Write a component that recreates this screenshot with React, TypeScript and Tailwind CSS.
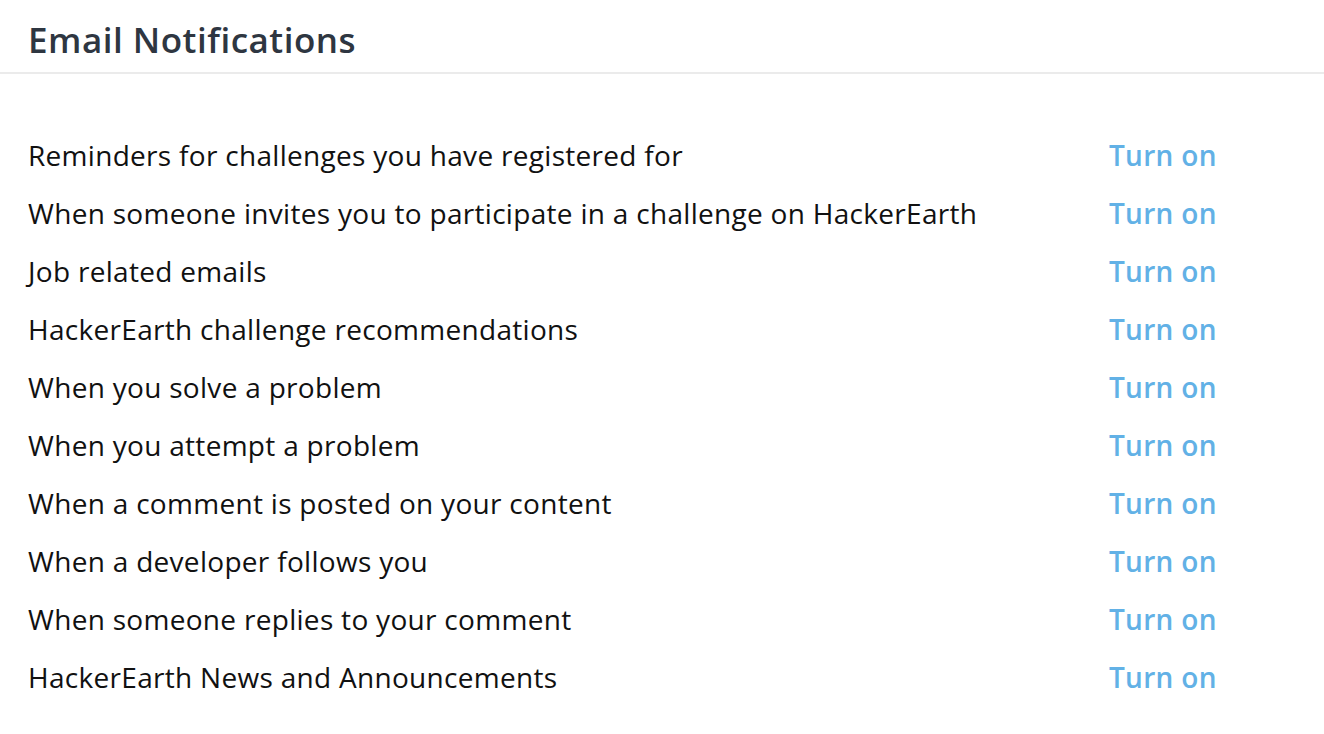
import React from "react";

const items = [
  "Reminders for challenges you have registered for",
  "When someone invites you to participate in a challenge on HackerEarth",
  "Job related emails",
  "HackerEarth challenge recommendations",
  "When you solve a problem",
  "When you attempt a problem",
  "When a comment is posted on your content",
  "When a developer follows you",
  "When someone replies to your comment",
  "HackerEarth News and Announcements",
];

export default function App() {
  return (
    <div className="w-[1324px] h-[734px] bg-white overflow-hidden" style={{ fontFamily: '"Open Sans", sans-serif' }}>
      <div className="h-[74px] border-b-2 border-[#ebebeb] pl-[28px] flex items-center">
        <h1 className="text-[35px] font-semibold text-[#2e3641] leading-none mt-[6px] tracking-[0.5px]">Email Notifications</h1>
      </div>
      <div className="pt-[52px]">
        {items.map((t) => (
          <div key={t} className="flex items-center h-[58px] pl-[28px]">
            <div className="w-[1081px] text-[28px] text-[#111] leading-none tracking-[0.3px]">{t}</div>
            <div className="text-[28px] font-semibold text-[#62b1e6] leading-none tracking-[0.3px]">Turn on</div>
          </div>
        ))}
      </div>
    </div>
  );
}
